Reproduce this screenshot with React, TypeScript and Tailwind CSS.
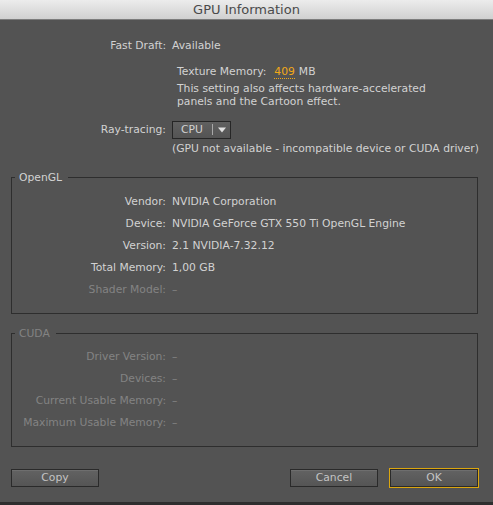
import React from "react";

const font = { fontFamily: '"DejaVu Sans", "Liberation Sans", sans-serif' };

function Row({ label, value, disabled }: { label: string; value: string; disabled?: boolean }) {
  return (
    <div className={`grid grid-cols-[154px_1fr] gap-x-[6px] h-[22px] items-center leading-[14px] ${disabled ? "text-[#838383]" : "text-[#d2d2d2]"}`}>
      <div className="text-right whitespace-nowrap">{label}</div>
      <div className="whitespace-nowrap">{value}</div>
    </div>
  );
}

function Group({ title, disabled, pt, children }: { title: string; disabled?: boolean; pt: string; children: React.ReactNode }) {
  return (
    <fieldset className={`border border-[#2e2e2e] ${pt} pb-[12px]`}>
      <legend className={`ml-[3px] pl-[4px] pr-[6px] leading-[14px] ${disabled ? "text-[#838383]" : "text-[#d2d2d2]"}`}>{title}</legend>
      {children}
    </fieldset>
  );
}

function Btn({ label, primary }: { label: string; primary?: boolean }) {
  return (
    <button
      className={`w-[88px] h-[18px] border border-[#2a2a2a] bg-gradient-to-b from-[#626262] to-[#555555] text-[#c4c4c4] leading-[14px] shadow-[inset_0_1px_0_#6e6e6e] ${primary ? "outline outline-1 outline-[#dba60f]" : ""}`}
    >
      {label}
    </button>
  );
}

export default function App() {
  return (
    <div className="w-[493px] h-[505px] bg-[#535353] flex flex-col text-[10.75px] overflow-hidden" style={font}>
      <div className="h-[20px] shrink-0 bg-gradient-to-b from-[#ececec] to-[#d0d0d0] border-b border-[#7c7c7c] flex items-center justify-center text-[13px] text-[#4a4a4a] leading-[16px]">
        GPU Information
      </div>

      <div className="pt-[19px] text-[#d2d2d2] leading-[14px]">
        <div className="grid grid-cols-[166px_1fr] gap-x-[6px] items-center">
          <div className="text-right">Fast Draft:</div>
          <div>Available</div>
        </div>
        <div className="pl-[177px] mt-[12px]">
          <div className="flex items-center">
            <span>Texture Memory:</span>
            <span className="ml-[8px] text-[#f2a818] border-b border-dotted border-[#f2a818] leading-[13px]">409</span>
            <span className="ml-[4px]">MB</span>
          </div>
          <div className="mt-[3px] leading-[13.4px]">
            This setting also affects hardware-accelerated
            <br />
            panels and the Cartoon effect.
          </div>
        </div>
        <div className="grid grid-cols-[166px_1fr] gap-x-[6px] items-center mt-[12px]">
          <div className="text-right">Ray-tracing:</div>
          <div>
            <div className="w-[59px] h-[18px] border border-[#262626] bg-gradient-to-b from-[#606060] to-[#545454] flex items-center">
              <span className="pl-[8px] w-[39px] text-[#d2d2d2]">CPU</span>
              <span className="w-px h-[11px] bg-[#a8a8a8]" />
              <svg width="8" height="6" viewBox="0 0 8 6" className="ml-[5px]">
                <path d="M0 0.5 L8 0.5 L4 5.5 Z" fill="#e0e0e0" />
              </svg>
            </div>
          </div>
        </div>
        <div className="pl-[172px] mt-[3px]">(GPU not available - incompatible device or CUDA driver)</div>
      </div>

      <div className="pl-[11px] pr-[15px] mt-[15px] flex flex-col gap-[13px]">
        <Group title="OpenGL" pt="pt-[6px]">
          <Row label="Vendor:" value="NVIDIA Corporation" />
          <Row label="Device:" value="NVIDIA GeForce GTX 550 Ti OpenGL Engine" />
          <Row label="Version:" value="2.1 NVIDIA-7.32.12" />
          <Row label="Total Memory:" value="1,00 GB" />
          <Row label="Shader Model:" value="–" disabled />
        </Group>
        <Group title="CUDA" disabled pt="pt-[5px]">
          <Row label="Driver Version:" value="–" disabled />
          <Row label="Devices:" value="–" disabled />
          <Row label="Current Usable Memory:" value="–" disabled />
          <Row label="Maximum Usable Memory:" value="–" disabled />
        </Group>
      </div>

      <div className="pl-[11px] pr-[15px] mt-[22px] flex items-center">
        <Btn label="Copy" />
        <div className="flex-1" />
        <Btn label="Cancel" />
        <div className="w-[12px]" />
        <Btn label="OK" primary />
      </div>

      <div className="mt-auto h-[3px] bg-[#2e2e2e]" />
    </div>
  );
}
